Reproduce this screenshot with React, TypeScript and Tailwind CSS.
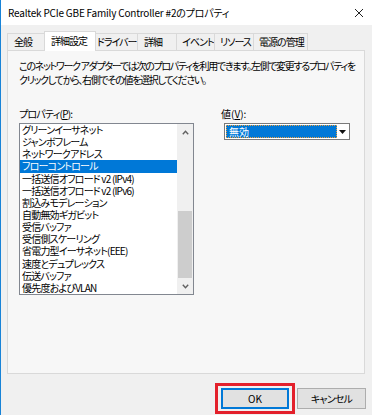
const tabs = [
    { label: '全般', w: 'w-[38px] pl-[6px]' },
    { label: '詳細設定', w: 'w-[52px] pl-[6px]', active: true },
    { label: 'ドライバー', w: 'w-[43px] pl-[1px] tracking-[-1.8px]' },
    { label: '詳細', w: 'w-[40px] pl-[6px]' },
    { label: 'イベント', w: 'w-[39px] pl-[5px]' },
    { label: 'リソース', w: 'w-[40px] pl-[5px]' },
    { label: '電源の管理', w: 'w-[55px] pl-[5px]' },
]

const items = [
    'グリーンイーサネット',
    'ジャンボフレーム',
    'ネットワークアドレス',
    'フローコントロール',
    '一括送信オフロード v2 (IPv4)',
    '一括送信オフロード v2 (IPv6)',
    '割込みモデレーション',
    '自動無効ギガビット',
    '受信バッファ',
    '受信側スケーリング',
    '省電力型イーサネット(EEE)',
    '速度とデュプレックス',
    '伝送バッファ',
    '優先度およびVLAN',
]

const Chevron = ({ up }: { up?: boolean }) => (
    <svg width="7" height="5" viewBox="0 0 7 5">
        <path
            d={up ? 'M0.8 4.2 L3.5 1.3 L6.2 4.2' : 'M0.8 0.8 L3.5 3.7 L6.2 0.8'}
            fill="none"
            stroke="#606060"
            strokeWidth="1.4"
        />
    </svg>
)

export default function App() {
    return (
        <div className="flex h-[415px] w-[372px] flex-col overflow-hidden border-l border-[#1883d7] bg-[#f0f0f0] font-['Noto_Sans_CJK_JP',sans-serif] text-[10px] text-black [font-feature-settings:'palt']">
            {/* title bar */}
            <div className="flex h-[25px] shrink-0 items-center justify-between bg-white pl-[7px] pr-[8px]">
                <span className="leading-none tracking-[-0.2px]">Realtek PCIe GBE Family Controller #2のプロパティ</span>
                <svg width="10" height="10" viewBox="0 0 10 10">
                    <path d="M1 1 L9 9 M9 1 L1 9" stroke="#222" strokeWidth="1" />
                </svg>
            </div>

            <div className="flex flex-1 flex-col pl-[6px] pr-[6px]">
                {/* tabs */}
                <div className="mt-[6px] flex h-[19px] items-end">
                    {tabs.map((t, i) => (
                        <div
                            key={t.label}
                            className={
                                (t.active
                                    ? 'relative z-10 -mb-px h-[20px] bg-white pt-[3px] '
                                    : 'h-[17px] bg-[#f0f0f0] pt-[2px] ') +
                                (i > 0 ? '-ml-px ' : '') +
                                'overflow-hidden border border-b-0 border-[#d9d9d9] leading-[12px] tracking-[-1px] whitespace-nowrap ' +
                                t.w
                            }
                        >
                            {t.label}
                        </div>
                    ))}
                </div>

                {/* panel */}
                <div className="flex h-[324px] w-[358px] flex-col border border-[#d9d9d9] bg-[#f7f7f7] pl-[11px] pt-[8px]">
                    <p className="whitespace-nowrap leading-[14px] tracking-[-1.3px]">
                        このネットワーク アダプターでは次のプロパティを利用できます。左側で変更するプロパティを
                        <br />
                        クリックしてから、右側でその値を選択してください。
                    </p>

                    <div className="mt-[20px] flex">
                        <div className="flex w-[175px] flex-col">
                            <div className="mb-[2px] leading-[14px] tracking-[-0.8px]">
                                プロパティ(<span className="underline">P</span>):
                            </div>
                            <div className="flex h-[172px] border border-[#828790] bg-white">
                                <div className="flex flex-1 flex-col">
                                    {items.map((it, i) => (
                                        <div
                                            key={it}
                                            className={
                                                'flex h-[12.2px] items-center whitespace-nowrap pl-[2px] leading-none tracking-[-0.8px] ' +
                                                (i === 3 ? 'bg-[#0078d7] text-white' : '')
                                            }
                                        >
                                            {it}
                                        </div>
                                    ))}
                                </div>
                                <div className="flex w-[16px] flex-col bg-[#f0f0f0]">
                                    <div className="flex h-[17px] items-center justify-center">
                                        <Chevron up />
                                    </div>
                                    <div className="flex flex-1 flex-col">
                                        <div className="mx-[1px] mt-auto h-[67px] bg-[#cdcdcd]" />
                                    </div>
                                    <div className="flex h-[16px] items-center justify-center">
                                        <Chevron />
                                    </div>
                                </div>
                            </div>
                        </div>

                        <div className="ml-[27px] flex flex-col">
                            <div className="mb-[2px] leading-[14px]">
                                値(<span className="underline">V</span>):
                            </div>
                            <div className="ml-[3px] flex h-[17px] w-[126px] border border-[#7a7a7a] bg-white p-[1px]">
                                <div className="flex flex-1 items-center border border-dotted border-[#e8a040] bg-[#0078d7] pl-[2px] leading-none text-white">
                                    無効
                                </div>
                                <div className="flex w-[11px] items-center justify-center">
                                    <svg width="7" height="4" viewBox="0 0 7 4">
                                        <path d="M0 0 L7 0 L3.5 4 Z" fill="#111" />
                                    </svg>
                                </div>
                            </div>
                        </div>
                    </div>
                </div>

                {/* buttons */}
                <div className="mt-[14px] flex justify-end gap-[8px]">
                    <div className="relative">
                        <button className="flex h-[21px] w-[68px] items-center justify-center border border-[#0078d7] bg-[#e1e1e1] leading-none shadow-[inset_0_0_0_1px_#0078d7]">
                            OK
                        </button>
                        <div className="pointer-events-none absolute -bottom-[5px] -left-[6px] -right-[6px] -top-[5px] border-[3px] border-[#e3202b]" />
                    </div>
                    <button className="flex h-[21px] w-[69px] items-center justify-center border border-[#adadad] bg-[#e1e1e1] leading-none tracking-[-0.8px]">
                        キャンセル
                    </button>
                </div>
            </div>
        </div>
    )
}
